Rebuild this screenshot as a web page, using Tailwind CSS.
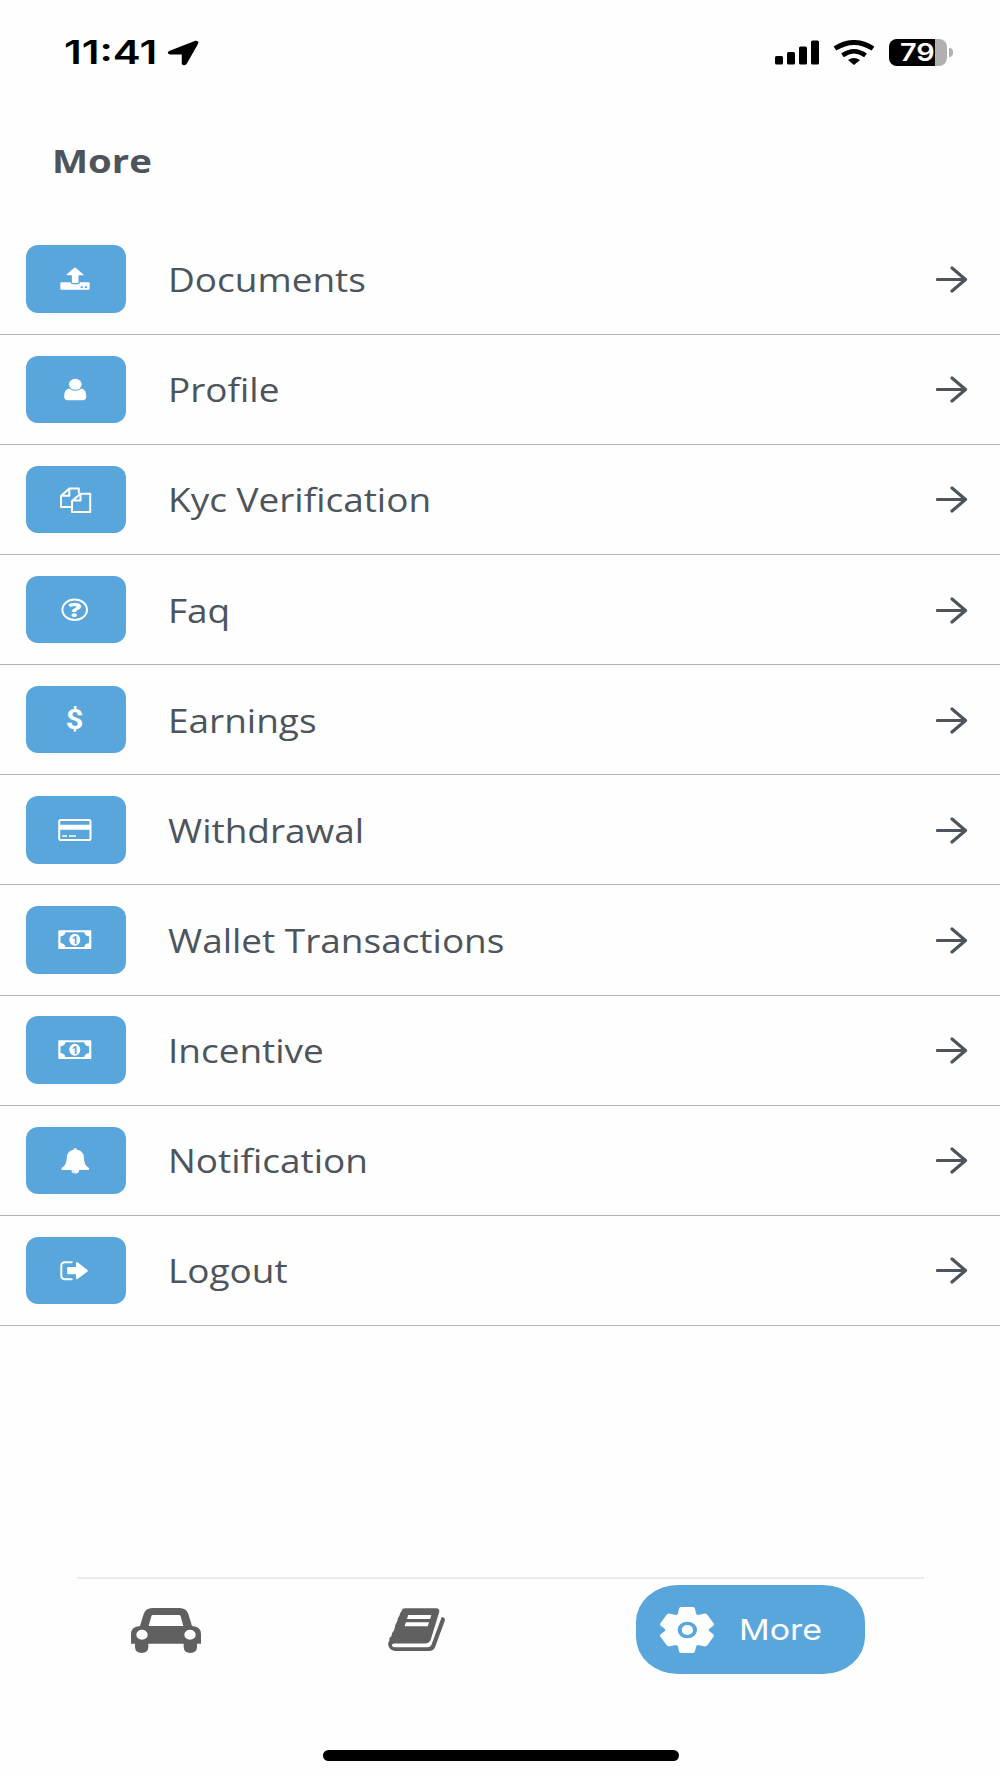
<!DOCTYPE html>
<html lang="en">
<head>
  <meta charset="UTF-8" />
  <title>More</title>
  <script src="https://cdn.jsdelivr.net/npm/@tailwindcss/browser@4"></script>
</head>
<body class="bg-[#fefefe] font-['Open_Sans',sans-serif] text-[#4d545b]">
  <div class="flex flex-col w-[1000px] h-[1778px] overflow-hidden">

    <!-- Status bar -->
    <div class="flex items-center justify-between h-[105px] pl-[64px] pr-[47px] text-black">
      <div class="flex items-center">
        <div class="w-[92px] pt-[2px]"><span class="inline-block origin-left scale-x-[1.31] whitespace-nowrap font-['Inter',sans-serif] font-semibold text-[32px] leading-none">11:41</span></div>
        <svg class="w-[32px] h-[26px] ml-[11px]" viewBox="0 0 31 26" preserveAspectRatio="none"><path d="M2 11 L27.500 .8 Q31.500 .5 30 4 L19 24 Q16.500 26.500 14.300 24 V14.500 H3 Q-1 13.500 2 11Z" fill="currentColor" /></svg>
      </div>
      <div class="flex items-center">
        <svg class="w-[44px] h-[26px]" viewBox="0 0 44 26" fill="currentColor">
          <rect x="0" y="16" width="8" height="8.500" rx="1.500" />
          <rect x="12" y="12" width="8" height="12.500" rx="1.500" />
          <rect x="24" y="6.500" width="8" height="18" rx="1.500" />
          <rect x="36" y="0.500" width="8" height="24" rx="1.500" />
        </svg>
        <svg class="w-[42px] h-[26px] ml-[14px]" viewBox="0 0 42 26" fill="none" stroke="currentColor" stroke-width="5">
          <path d="M2 8.500 Q21 -3.500 40 8.500" />
          <path d="M9.500 15.300 Q21 7.200 32.500 15.300" stroke-width="4.600" />
          <path d="M15 20 Q21 16 27 20 L21 25Z" fill="currentColor" stroke="none" />
        </svg>
        <div class="relative flex items-center w-[58px] h-[27px] ml-[14px] pl-[11px] rounded-[8px] overflow-hidden bg-[#b0b0b0]">
          <div class="absolute left-0 top-0 w-[46px] h-full bg-black"></div>
          <span class="relative inline-block origin-left scale-x-[1.2] font-['Inter',sans-serif] font-semibold text-[24px] leading-[27px] text-white">79</span>
        </div>
        <div class="w-[4px] h-[9px] ml-[2px] rounded-r-full bg-[#b0b0b0]"></div>
      </div>
    </div>

    <!-- Title -->
    <div class="h-[119.600px] pl-[52px] pt-[33px]">
      <h1 class="inline-block origin-left scale-x-[1.16] font-bold text-[33px] leading-[46px]">More</h1>
    </div>

    <div id="menuList"></div>

    <!-- Bottom navigation -->
    <div class="mt-auto flex flex-col items-center h-[201px]">
      <div class="w-[847px] h-[2px] bg-[#ebebeb]"></div>
      <div class="flex items-center w-full h-[89px] mt-[6px] pl-[131px] text-[#606060]">
        <svg class="w-[70px] h-[45px] mt-[2px]" viewBox="0 0 210 135" fill="currentColor">
          <path fill-rule="evenodd" d="M27 54 L38 18 Q44 0 64 0 H146 Q166 0 172 18 L183 54 Q210 56 210 78 V107 H198 V118 Q197 135 178 135 Q159 135 158 118 V107 H52 V118 Q51 135 32 135 Q13 135 12 118 V107 H0 V78 Q0 56 27 54Z M53 54 H157 L149 25 Q148 21 144 21 H66 Q62 21 61 25Z M16 80 A17 15 0 1 0 50 80 A17 15 0 1 0 16 80Z M160 80 A17 15 0 1 0 194 80 A17 15 0 1 0 160 80Z" />
        </svg>
        <svg class="w-[57px] h-[43px] ml-[187px]" viewBox="0 0 172 130" fill="currentColor">
          <path fill-rule="evenodd" d="M52 1 H146 Q158 3 154 14 L129 96 Q125 107 111 107 H19 Q10 108 12 114 Q14 119 22 119 H119 Q128 119 131 112 L160 33 Q160 24 167 29 Q174 31 171 40 L142 119 Q138 130 124 130 H22 Q6 129 1 114 Q-1 105 4 98 L4 90 Q11 88 12 76 Q18 69 20 61 Q20 52 25 45 Q29 39 30 30 Q35 24 37 15 Q42 8 44 2Z M61 21 L57 33 H127 L131 21Z M54 43 L50 55 H120 L124 43Z" />
        </svg>
        <div class="flex items-center w-[229px] h-[89px] ml-[191px] pl-[24px] rounded-[42px_/_37px] bg-[#58a6dc] text-white">
          <svg class="w-[54px] h-[46px]" viewBox="0 0 162 138" fill="currentColor">
            <path fill-rule="evenodd" d="M63 0 H99 Q104 0 105 5 L108 19 Q109 24 115 24 L132 20 Q138 19 142 23 L160 48 Q164 53 159 57 L148 65 Q144 69 148 73 L159 81 Q164 85 160 90 L142 115 Q138 119 132 118 L115 114 Q109 114 108 119 L105 133 Q104 138 99 138 H63 Q58 138 57 133 L54 119 Q53 114 47 114 L30 118 Q24 119 20 115 L2 90 Q-2 85 3 81 L14 73 Q18 69 14 65 L3 57 Q-2 53 2 48 L20 23 Q24 19 30 20 L47 24 Q53 24 54 19 L57 5 Q58 0 63 0Z M53 69 A29 25 0 1 0 111 69 A29 25 0 1 0 53 69Z" />
            <ellipse cx="82" cy="69" rx="17" ry="15" />
          </svg>
          <span class="inline-block origin-left scale-x-[1.17] ml-[25px] font-['Inter',sans-serif] text-[29px] leading-none">More</span>
        </div>
      </div>
      <div class="w-[356px] h-[11px] mt-[76px] ml-px rounded-full bg-black"></div>
    </div>
  </div>

  <script>
    const money = `
      <path fill-rule="evenodd" d="M33 24.300 H64.700 Q65.300 24.300 65.300 25 V42.300 Q65.300 43 64.700 43 H33 Q32.300 43 32.300 42.300 V25 Q32.300 24.300 33 24.300Z M39.300 26.300 Q39 30 34.500 30.300 V37 Q39 37.500 39.300 41.100 H58.300 Q58.700 37.500 63.100 37 V30.300 Q58.700 30 58.300 26.300Z" fill="white" />
      <ellipse cx="48.800" cy="33.700" rx="5.500" ry="6" fill="white" />
      <text x="48.800" y="37.600" text-anchor="middle" font-size="11" font-weight="700" fill="#58a6dc">1</text>`;

    // icons are drawn on the 100 x 67.5 tile
    const items = [
      { label: "Documents", icon: `
        <path d="M49 22.300 L57.500 29.500 Q58 30.200 57 30.200 H52.500 V37 Q52.500 38 51.500 38 H46.900 Q45.900 38 45.900 37 V30.200 H41 Q40 30.200 40.500 29.500Z" fill="white" />
        <path fill-rule="evenodd" d="M35.500 37.300 H44.500 Q45 39.300 47 39.300 H51.500 Q53.500 39.300 54 37.300 H62.500 Q63.700 37.300 63.700 38.500 V43.500 Q63.700 44.800 62.500 44.800 H35.500 Q34.300 44.800 34.300 43.500 V38.500 Q34.300 37.300 35.500 37.300Z M54.700 41.200 V43 H56.800 V41.200Z M58.900 41.200 V43 H61 V41.200Z" fill="white" />` },
      { label: "Profile", icon: `
        <ellipse cx="49.300" cy="28.300" rx="6.400" ry="5.500" fill="white" />
        <path d="M43 32.500 Q49.300 37 55.600 32.500 Q60.300 33.500 60.300 40.500 Q60.300 44.300 56.500 44.300 H42 Q38.100 44.300 38.100 40.500 Q38.100 33.500 43 32.500Z" fill="white" />` },
      { label: "Kyc Verification", icon: `
        <g fill="none" stroke="white" stroke-width="2" stroke-linejoin="round">
          <path d="M45.500 41 H35 V30 L43.300 22.600 H52.800 V27.500 M43.300 22.600 V29.700 H35" />
          <path d="M54.500 27.700 H64.200 V46 H46 V35 L54.500 27.700 V34.500 H46" />
        </g>` },
      { label: "Faq", icon: `
        <ellipse cx="48.700" cy="33.700" rx="12.300" ry="10.200" fill="none" stroke="white" stroke-width="2" />
        <text transform="translate(48.700 40.500) scale(1.400 1)" text-anchor="middle" font-size="18.500" font-weight="800" fill="white">?</text>` },
      { label: "Earnings", icon: `
        <text transform="translate(48.700 43.300) scale(1.100 1)" text-anchor="middle" font-family="Roboto" font-size="28" font-weight="700" fill="white">$</text>` },
      { label: "Withdrawal", icon: `
        <rect x="33.200" y="23.900" width="31.300" height="20" rx="1.500" fill="none" stroke="white" stroke-width="2" />
        <path d="M33 28.700 H64.700 V33.700 H33Z M36.300 39.200 H41 V40.700 H36.300Z M43 39.200 H50 V40.700 H43Z" fill="white" />` },
      { label: "Wallet Transactions", icon: money },
      { label: "Incentive", icon: money },
      { label: "Notification", icon: `
        <path d="M49.300 21.300 Q51 21.300 50.900 22.700 Q57.500 23.700 57.800 30.500 Q58 38.500 63 41 Q63.800 42.600 62 43 H53.300 Q53 46.500 49.300 46.500 Q45.600 46.500 45.300 43 H36.600 Q34.800 42.600 35.600 41 Q40.600 38.500 40.800 30.500 Q41.100 23.700 47.700 22.700 Q47.600 21.300 49.300 21.300Z" fill="white" />
        <path d="M46.800 43.300 Q47.200 45.200 49.300 45.300" fill="none" stroke="#58a6dc" stroke-width=".5" />` },
      { label: "Logout", icon: `
        <path d="M45.700 25.300 H39 Q35.300 25.300 35.300 28.800 V38.600 Q35.300 42.200 39 42.200 H45.700" fill="none" stroke="white" stroke-width="2" stroke-linecap="round" />
        <path d="M41.900 30 H50 V26 Q50.300 24.600 51.500 25.300 L61.500 32.900 Q62.200 33.700 61.500 34.400 L51.500 42 Q50.300 42.600 50 41.300 V37.300 H41.900 Q41.200 37.300 41.200 36.600 V30.700 Q41.200 30 41.900 30Z" fill="white" />` },
    ];

    document.getElementById("menuList").innerHTML = items.map((item) => `
      <div class="flex items-center h-[110.150px] pl-[26px] pr-[32px] border-b border-[#b4b4b4]">
        <div class="w-[100px] h-[67.500px] rounded-[12px] bg-[#58a6dc]">
          <svg class="w-full h-full" viewBox="0 0 100 67.500">${item.icon}</svg>
        </div>
        <div class="grow pl-[42px] pt-[2px]">
          <span class="inline-block origin-left scale-x-[1.12] whitespace-nowrap text-[33px] leading-[46px]">${item.label}</span>
        </div>
        <svg class="w-[32px] h-[28px]" viewBox="0 0 32 28" fill="none" stroke="currentColor" stroke-width="3.200" stroke-linecap="round" stroke-linejoin="round">
          <path d="M1.500 14.500 H29.500 M16 3 L29.500 14.500 L16 26" />
        </svg>
      </div>
    `).join("");
  </script>
</body>
</html>
